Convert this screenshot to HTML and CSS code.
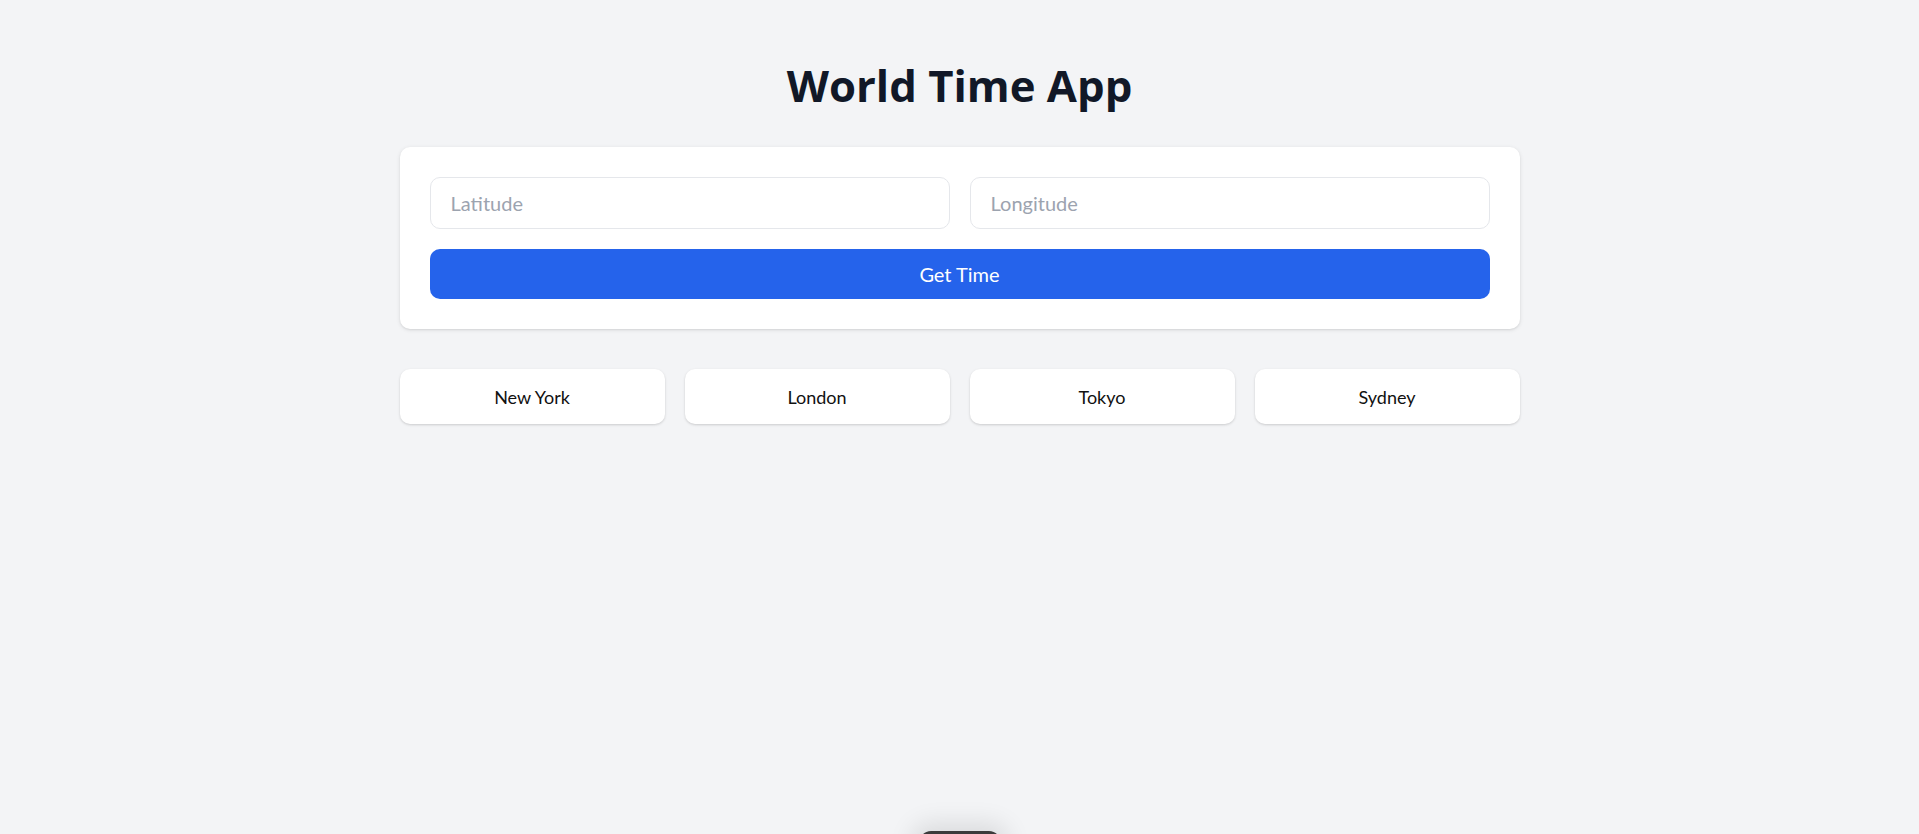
FILE: index.html
```html
<!DOCTYPE html>
<html lang="en">
<head>
<meta charset="utf-8">
<title>World Time App</title>
<link rel="stylesheet" href="styles.css">
</head>
<body>
<main class="container">
  <h1 class="title">World Time App</h1>
  <section class="card">
    <div class="inputs">
      <input class="field" type="text" placeholder="Latitude">
      <input class="field" type="text" placeholder="Longitude">
    </div>
    <button class="primary" type="button">Get Time</button>
  </section>
  <section class="cities">
    <button class="city" type="button">New York</button>
    <button class="city" type="button">London</button>
    <button class="city" type="button">Tokyo</button>
    <button class="city" type="button">Sydney</button>
  </section>
</main>
<div class="dock"></div>
</body>
</html>
```
FILE: styles.css
```css
* { box-sizing: border-box; }
html, body { margin: 0; padding: 0; }
body {
  background: #f3f4f6;
  font-family: "Lato", "Open Sans", sans-serif;
  color: #111827;
  min-height: 834px;
  overflow: hidden;
}
.container {
  width: 1120px;
  margin: 0 auto;
  padding-top: 60px;
}
.title {
  margin: 0 0 37px;
  font-family: "Open Sans", "Noto Sans", sans-serif;
  font-weight: 700;
  font-size: 43.7px;
  line-height: 50px;
  text-align: center;
  color: #111827;
}
.card {
  background: #fff;
  border-radius: 10px;
  padding: 30px;
  box-shadow: 0 1px 4px rgba(0,0,0,0.10), 0 1px 2px rgba(0,0,0,0.06);
  display: flex;
  flex-direction: column;
  gap: 20px;
}
.inputs {
  display: grid;
  grid-template-columns: 1fr 1fr;
  gap: 20px;
}
.field {
  height: 52px;
  border: 1px solid #e5e7eb;
  border-radius: 10px;
  padding: 0 20px;
  font-family: "Lato", "Open Sans", sans-serif;
  font-size: 20px;
  color: #111827;
  background: #fff;
  outline: none;
}
.field::placeholder { color: #9ca3af; }
.primary {
  height: 50px;
  border: 0;
  border-radius: 10px;
  background: #2563eb;
  color: #fff;
  font-family: "Lato", "Open Sans", sans-serif;
  font-size: 20px;
  cursor: pointer;
}
.cities {
  margin-top: 40px;
  display: grid;
  grid-template-columns: repeat(4, 1fr);
  gap: 20px;
}
.city {
  height: 55px;
  border: 0;
  border-radius: 10px;
  background: #fff;
  box-shadow: 0 1px 3px rgba(0,0,0,0.12), 0 1px 2px rgba(0,0,0,0.05);
  font-family: "Lato", "Open Sans", sans-serif;
  font-size: 18px;
  color: #111;
  cursor: pointer;
}
.dock {
  position: fixed;
  left: 50%;
  bottom: -22px;
  width: 82px;
  height: 25px;
  margin-left: -41px;
  border-radius: 12px;
  background: #3b3b3b;
  box-shadow: 0 0 24px 8px rgba(0,0,0,0.10);
}
```
